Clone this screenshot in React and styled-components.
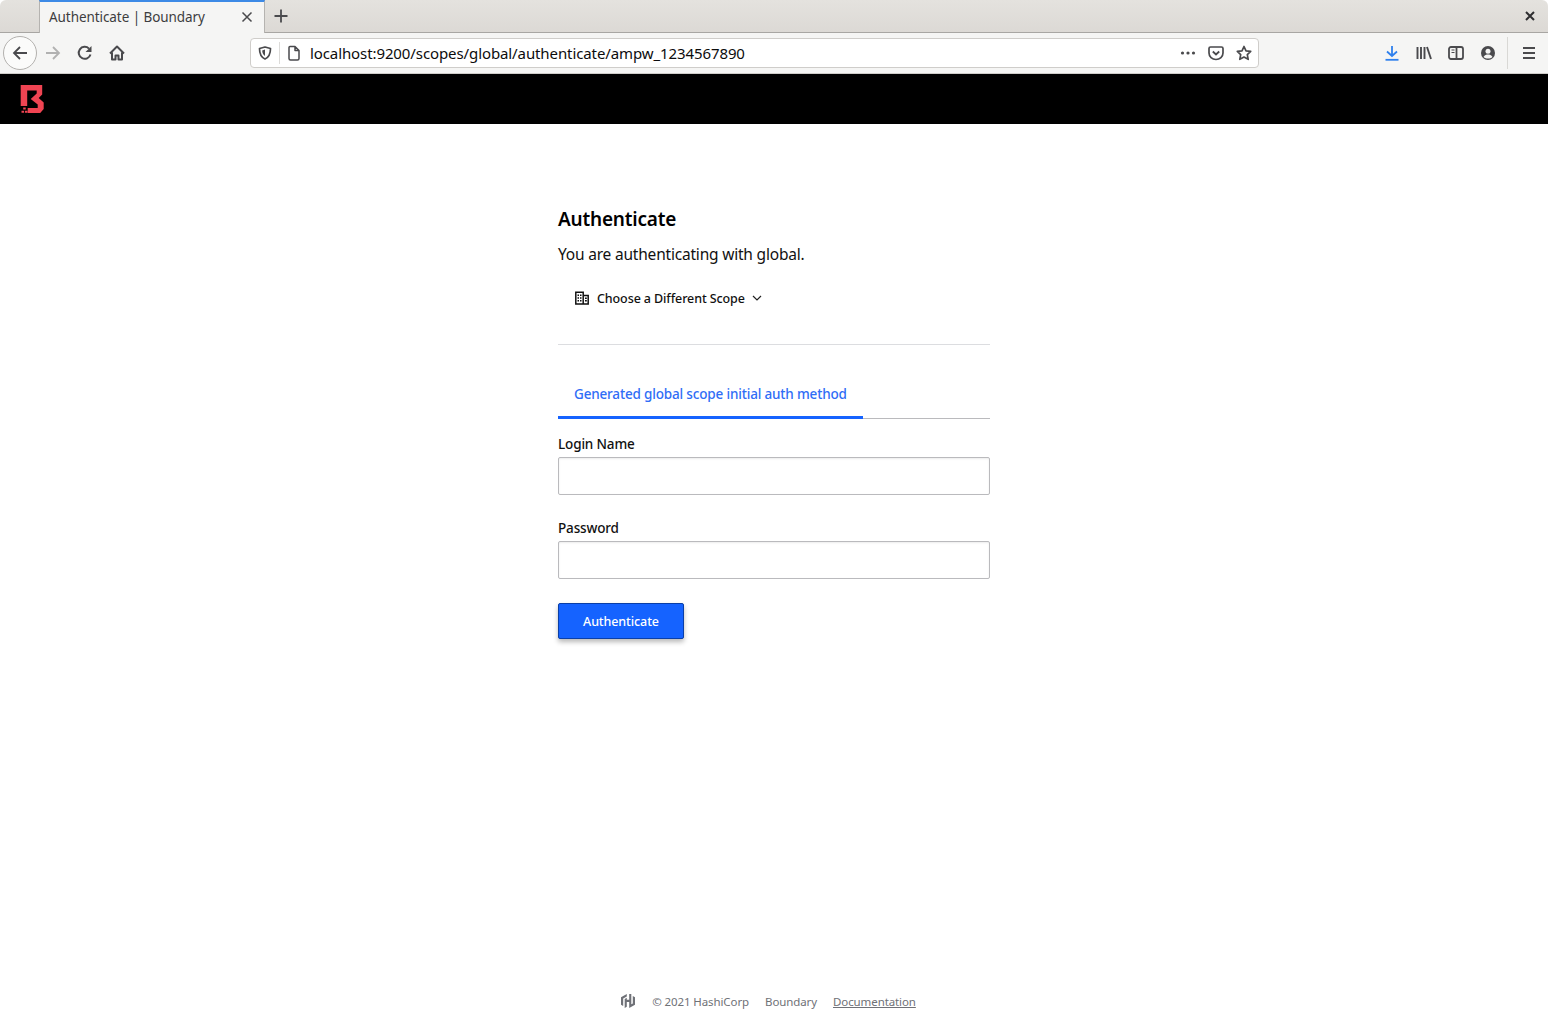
import React from 'react';
import styled, { createGlobalStyle } from 'styled-components';

const Global = createGlobalStyle`
  html, body { margin: 0; height: 100%; background: #fff; }
  body { font-family: "Noto Sans", "Open Sans", sans-serif; color: #0c0c0e; }
  * { box-sizing: border-box; }
`;

const Page = styled.div`
  height: 1027px;
  display: flex;
  flex-direction: column;
  overflow: hidden;
`;

const TabBar = styled.div`
  height: 33px;
  display: flex;
  background: linear-gradient(#e4e2de, #dcd9d5);
  border-bottom: 1px solid #a8a6a3;
  border-radius: 6px 6px 0 0;
  padding-left: 39px;
  align-items: stretch;
`;

const Tab = styled.div`
  width: 226px;
  height: 33px;
  background: #f5f5f4;
  border-top: 2px solid #3d8ae6;
  border-left: 1px solid #b5b3b0;
  border-right: 1px solid #b5b3b0;
  display: flex;
  align-items: center;
  justify-content: space-between;
  padding: 0 11px 2px 9px;
  font-size: 13.5px;
  letter-spacing: -0.07px;
  color: #3d3d3f;
`;

const NewTab = styled.div`
  width: 32px;
  display: flex;
  align-items: center;
  justify-content: center;
`;

const WindowClose = styled.div`
  margin-left: auto;
  width: 36px;
  display: flex;
  align-items: center;
  justify-content: center;
`;

const NavBar = styled.div`
  height: 41px;
  background: #f5f5f4;
  border-bottom: 1px solid #cfcdca;
  display: flex;
  align-items: center;
  padding: 0 3px;
`;

const BackCircle = styled.div`
  width: 34px;
  height: 34px;
  border: 1px solid #b3b1ae;
  border-radius: 50%;
  background: #fbfbfa;
  display: flex;
  align-items: center;
  justify-content: center;
`;

const NavIcon = styled.div`
  width: 32px;
  display: flex;
  align-items: center;
  justify-content: center;
`;

const UrlBar = styled.div`
  width: 1009px;
  height: 30px;
  margin-left: 117px;
  background: #fff;
  border: 1px solid #cfcdca;
  border-radius: 4px;
  display: flex;
  align-items: center;
  padding: 0 0 0 6px;
  font-size: 15px;
  letter-spacing: -0.1px;
  color: #0c0c0d;
`;

const UrlDivider = styled.div`
  width: 1px;
  height: 22px;
  background: #dcdbd9;
  margin: 0 6px;
`;

const UrlText = styled.span`
  margin-left: 8px;
  flex: 1;
  white-space: nowrap;
`;

const UrlIcon = styled.div`
  width: 28px;
  display: flex;
  align-items: center;
  justify-content: center;
`;

const Tools = styled.div`
  margin-left: auto;
  display: flex;
  align-items: center;
`;

const ToolIcon = styled.div`
  width: 32px;
  display: flex;
  align-items: center;
  justify-content: center;
`;

const ToolDivider = styled.div`
  width: 1px;
  height: 32px;
  background: #d9d8d5;
  margin: 0 5px 0 3px;
`;

const AppHeader = styled.header`
  height: 50px;
  background: #000;
  display: flex;
  align-items: center;
  padding: 0 0 0 20px;
`;

const Main = styled.main`
  width: 432px;
  margin: 0 auto;
  padding-top: 81px;
  flex: 1;
`;

const Title = styled.h1`
  margin: 0;
  font-size: 19px;
  letter-spacing: -0.2px;
  line-height: 28px;
  font-weight: 600;
  color: #000;
`;

const Lead = styled.p`
  margin: 9px 0 0;
  font-size: 15.5px;
  letter-spacing: -0.2px;
  line-height: 24px;
  color: #111;
`;

const ScopeButton = styled.div`
  display: flex;
  align-items: center;
  margin-top: 20px;
  padding: 0 0 0 17px;
  height: 24px;
  font-size: 12.5px;
  letter-spacing: -0.1px;
  font-weight: 500;
  color: #111;
`;

const ScopeLabel = styled.span`
  margin: 0 7px 0 8px;
`;

const Rule = styled.hr`
  margin: 34px 0 0;
  border: 0;
  border-top: 1px solid #dcdde0;
`;

const Tabs = styled.div`
  margin-top: 30px;
  height: 44px;
  border-bottom: 1px solid #bababd;
  display: flex;
`;

const AuthTab = styled.div`
  height: 44px;
  padding: 9px 16px 0;
  border-bottom: 3px solid #1563ff;
  font-size: 13.5px;
  letter-spacing: -0.17px;
  line-height: 20px;
  font-weight: 500;
  color: #2f6df6;
`;

const Field = styled.div`
  margin-top: ${p => p.$first ? '15px' : '23px'};
`;

const Label = styled.label`
  display: block;
  font-size: 13.5px;
  letter-spacing: -0.15px;
  line-height: 20px;
  font-weight: 500;
  color: #111;
  margin-bottom: 3px;
`;

const Input = styled.input`
  display: block;
  width: 100%;
  height: 38px;
  border: 1px solid #bababd;
  border-radius: 2px;
  background: #fff;
  box-shadow: inset 0 1px 2px rgba(0, 0, 0, 0.08);
  outline: none;
`;

const Submit = styled.button`
  margin-top: 24px;
  width: 126px;
  height: 36px;
  background: #1563ff;
  border: 1px solid #0a3fa8;
  border-radius: 2px;
  color: #fff;
  font-family: inherit;
  font-size: 12.5px;
  letter-spacing: -0.1px;
  font-weight: 500;
  box-shadow: 0 3px 5px rgba(0, 0, 0, 0.28);
`;

const Footer = styled.footer`
  height: 50px;
  display: flex;
  align-items: flex-start;
  justify-content: center;
  padding: 16px 12px 0 0;
  font-size: 11.5px;
  letter-spacing: -0.1px;
  line-height: 18px;
  color: #6f7177;
`;

const FooterItem = styled.span`
  margin-left: 16px;
`;

const FooterLink = styled.a`
  margin-left: 16px;
  color: #6f7177;
  text-decoration: underline;
`;

const Icon = ({ children, size = 16, w, h, box, ...rest }) => (
  <svg width={w || size} height={h || size} viewBox={box || `0 0 ${size} ${size}`} fill="none" {...rest}>
    {children}
  </svg>
);

const dark = '#4a4a4d';

export default function App() {
  return (
    <Page>
      <Global />
      <TabBar>
        <Tab>
          <span>Authenticate | Boundary</span>
          <Icon size={12}><path d="M1.5 1.5l9 9M10.5 1.5l-9 9" stroke={dark} strokeWidth="1.5" /></Icon>
        </Tab>
        <NewTab>
          <Icon size={16}><path d="M8 1.5v13M1.5 8h13" stroke={dark} strokeWidth="1.8" /></Icon>
        </NewTab>
        <WindowClose>
          <Icon size={10}><path d="M1 1l8 8M9 1l-8 8" stroke="#2e2e30" strokeWidth="2" /></Icon>
        </WindowClose>
      </TabBar>
      <NavBar>
        <BackCircle>
          <Icon size={16}><path d="M15 8H2M8 2L2 8l6 6" stroke={dark} strokeWidth="1.8" /></Icon>
        </BackCircle>
        <NavIcon>
          <Icon size={16}><path d="M1 8h13M8 2l6 6-6 6" stroke="#b1b1b1" strokeWidth="1.8" /></Icon>
        </NavIcon>
        <NavIcon>
          <Icon size={16}>
            <path d="M13.5 9.5A6 6 0 1 1 12 3.6" stroke={dark} strokeWidth="2" />
            <path d="M14.5 1v6h-6z" fill={dark} />
          </Icon>
        </NavIcon>
        <NavIcon>
          <Icon size={16}>
            <path d="M1 8.500l7-7 7 7M3 7.500v7h3.500v-4h3v4H13v-7" stroke={dark} strokeWidth="2" strokeLinejoin="round" />
          </Icon>
        </NavIcon>
        <UrlBar>
          <Icon size={16}>
            <path d="M8 2l5.500 1.500c0 5-1 8.500-5.500 10.500-4.500-2-5.500-5.500-5.500-10.500z" stroke={dark} strokeWidth="1.7" strokeLinejoin="round" />
            <path d="M8 4.500v6.500c-1.700-1-2.800-3-2.800-5.500z" fill={dark} />
          </Icon>
          <UrlDivider />
          <Icon size={16}>
            <path d="M3 2.500a1 1 0 0 1 1-1h5l4 4v8a1.500 1.500 0 0 1-1.500 1.500h-7A1.500 1.500 0 0 1 3 13.500zM9 1.500v4h4" stroke={dark} strokeWidth="1.5" strokeLinejoin="round" />
          </Icon>
          <UrlText>localhost:9200/scopes/global/authenticate/ampw_1234567890</UrlText>
          <UrlIcon>
            <Icon size={16}><circle cx="2.500" cy="8" r="1.600" fill={dark} /><circle cx="8" cy="8" r="1.600" fill={dark} /><circle cx="13.500" cy="8" r="1.600" fill={dark} /></Icon>
          </UrlIcon>
          <UrlIcon>
            <Icon size={16}>
              <path d="M1 3.500a1.500 1.500 0 0 1 1.500-1.500h11a1.500 1.500 0 0 1 1.500 1.500V8a7 6.500 0 0 1-14 0z" stroke={dark} strokeWidth="1.7" />
              <path d="M4.800 6.500L8 9.500l3.200-3" stroke={dark} strokeWidth="1.800" />
            </Icon>
          </UrlIcon>
          <UrlIcon>
            <Icon size={16}>
              <path d="M8 1.500l2 4.300 4.700.600-3.400 3.200.9 4.700L8 12l-4.200 2.300.9-4.700L1.300 6.400 6 5.800z" stroke={dark} strokeWidth="1.700" strokeLinejoin="round" />
            </Icon>
          </UrlIcon>
        </UrlBar>
        <Tools>
          <ToolIcon>
            <Icon size={16}>
              <path d="M8 1v10M3 6.500L8 11l5-4.500" stroke="#2f80ed" strokeWidth="1.800" />
              <path d="M1.500 14.800h13" stroke="#2f80ed" strokeWidth="1.800" />
            </Icon>
          </ToolIcon>
          <ToolIcon>
            <Icon size={16}>
              <path d="M1.500 2v12M5 2v12M8.500 2v12M11 2l4 12" stroke={dark} strokeWidth="1.900" />
            </Icon>
          </ToolIcon>
          <ToolIcon>
            <Icon size={16}>
              <rect x="1" y="2" width="14" height="12" rx="2" stroke={dark} strokeWidth="1.800" />
              <path d="M8.500 2v12" stroke={dark} strokeWidth="1.800" />
              <path d="M3.500 5h3M3.500 7.500h3" stroke={dark} strokeWidth="1" />
            </Icon>
          </ToolIcon>
          <ToolIcon>
            <Icon size={16}>
              <circle cx="8" cy="8" r="7" fill={dark} />
              <circle cx="8" cy="6.300" r="2.500" fill="#f5f5f4" />
              <path d="M3.500 12c1-2 3-2.500 4.500-2.500s3.500.5 4.500 2.500c-2.500 2-6.500 2-9 0z" fill="#f5f5f4" />
            </Icon>
          </ToolIcon>
          <ToolDivider />
          <ToolIcon>
            <Icon size={16}><path d="M2 3h12M2 8h12M2 13h12" stroke={dark} strokeWidth="1.900" /></Icon>
          </ToolIcon>
        </Tools>
      </NavBar>
      <AppHeader>
        <Icon w={25} h={30} box="-0.7 0 25 30">
          <path d="M0 1h21.500v9.500L18 14l5 4.500V25l-3.500 4H7v-5h10v-3.500L10 15l6-5.500V6.500H6.500V22H0z" fill="#f04452" />
          <path d="M2.500 23.500H5v2H2.500zM.8 26.800h2.500v2H.8zM4.200 26.800h2.600v2H4.200z" fill="#f04452" />
        </Icon>
      </AppHeader>
      <Main>
        <Title>Authenticate</Title>
        <Lead>You are authenticating with global.</Lead>
        <ScopeButton>
          <Icon size={14}>
            <path d="M0.800 1.200h7.400v11.800H0.800zM8.200 4.500h5v8.500h-5z" stroke="#111" strokeWidth="1.500" />
            <path d="M2.500 3.500h1.500V5H2.500zM5 3.500h1.500V5H5zM2.500 6.300h1.500v1.500H2.500zM5 6.300h1.500v1.500H5zM2.500 9h1.500v1.500H2.500zM5 9h1.500v1.500H5zM10 6.500h1.800V8H10zM10 9h1.800v1.500H10z" fill="#111" />
          </Icon>
          <ScopeLabel>Choose a Different Scope</ScopeLabel>
          <Icon size={10}><path d="M1 3l4 4 4-4" stroke="#222" strokeWidth="1.200" /></Icon>
        </ScopeButton>
        <Rule />
        <Tabs>
          <AuthTab>Generated global scope initial auth method</AuthTab>
        </Tabs>
        <Field $first>
          <Label>Login Name</Label>
          <Input />
        </Field>
        <Field>
          <Label>Password</Label>
          <Input type="password" />
        </Field>
        <Submit>Authenticate</Submit>
      </Main>
      <Footer>
        <Icon w={16} h={16} box="0 0 16 16">
          <path d="M6.800 1L1 4.300v7.400l2.200 1.300V5.600l3.600-2.100zM9.200 1v5.800H6.800V4.700L4.700 5.900V15l2.100-1.200V9h2.400v4.300l2.100-1.200V1zM12.800 3v7.400L9.200 12.500V15L15 11.700V4.300z" fill="#6f7177" />
        </Icon>
        <FooterItem>© 2021 HashiCorp</FooterItem>
        <FooterItem>Boundary</FooterItem>
        <FooterLink>Documentation</FooterLink>
      </Footer>
    </Page>
  );
}
